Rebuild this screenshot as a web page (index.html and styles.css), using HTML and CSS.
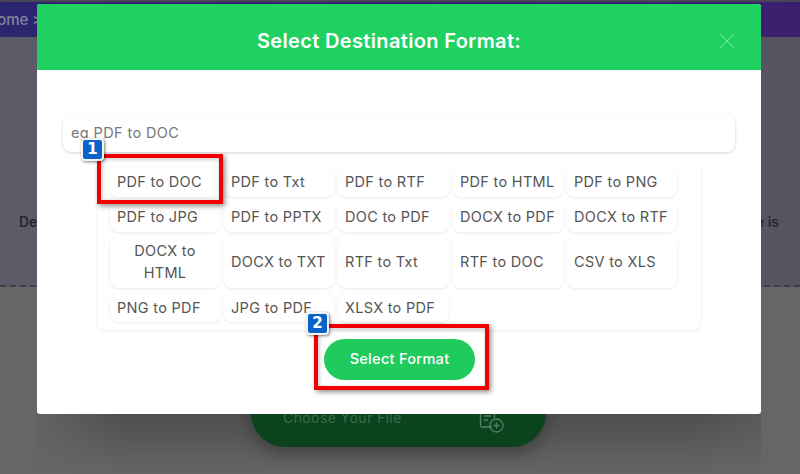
FILE: index.html
```html
<!DOCTYPE html>
<html lang="en">
<head>
<meta charset="utf-8">
<title>Select Destination Format</title>
<link rel="stylesheet" href="styles.css">
</head>
<body>
<div class="page">
  <nav class="crumbs">Home &gt;</nav>
  <section class="intro">
    <p class="intro-text"><span>De</span><span>e is</span></p>
  </section>
  <section class="upload">
    <div class="choose">
      <span>Choose Your File</span>
      <svg class="choose-icon" viewBox="0 0 26 24" width="26" height="24" fill="none" stroke="currentColor" stroke-width="1.3"><path d="M13 17H3a1.500 1.500 0 0 1-1.500-1.500V1.500H14a1.500 1.500 0 0 1 1.500 1.500v5"/><path d="M5 6h7M5 10h4"/><circle cx="17.500" cy="15.500" r="6.500"/><path d="M17.500 12.500v6M14.500 15.500h6"/></svg>
    </div>
  </section>
</div>
<div class="overlay">
  <div class="modal">
    <header class="modal-head">
      <h2>Select Destination Format:</h2>
      <svg class="close" viewBox="0 0 16 16" width="16" height="16" stroke="currentColor" fill="none" stroke-width="1"><path d="M.5.500l15 15M15.500.500l-15 15"/></svg>
    </header>
    <div class="modal-body">
      <div class="search">eg PDF to DOC</div>
      <div class="panel">
        <div class="chip">PDF to DOC</div>
        <div class="chip">PDF to Txt</div>
        <div class="chip">PDF to RTF</div>
        <div class="chip">PDF to HTML</div>
        <div class="chip">PDF to PNG</div>
        <div class="chip">PDF to JPG</div>
        <div class="chip">PDF to PPTX</div>
        <div class="chip">DOC to PDF</div>
        <div class="chip">DOCX to PDF</div>
        <div class="chip">DOCX to RTF</div>
        <div class="chip center">DOCX to HTML</div>
        <div class="chip">DOCX to TXT</div>
        <div class="chip">RTF to Txt</div>
        <div class="chip">RTF to DOC</div>
        <div class="chip">CSV to XLS</div>
        <div class="chip">PNG to PDF</div>
        <div class="chip">JPG to PDF</div>
        <div class="chip">XLSX to PDF</div>
      </div>
      <div class="actions"><button class="select">Select Format</button></div>
    </div>
  </div>
</div>
<div class="mark mark-one"></div>
<div class="badge badge-one">1</div>
<div class="mark mark-two"></div>
<div class="badge badge-two">2</div>
</body>
</html>
```
FILE: styles.css
```css
* { box-sizing: border-box; }
html, body { margin: 0; padding: 0; }
body { width: 800px; height: 474px; overflow: hidden; position: relative; background: #4a4658; font-family: "Inter", "Liberation Sans", sans-serif; }
.page { display: flex; flex-direction: column; height: 474px; }
.crumbs { height: 35px; margin-top: 2px; background: linear-gradient(90deg, #2b2670, #3a1f6e); color: #86839f; font-size: 15px; font-weight: 500; padding: 8px 0 0 0; text-indent: -14px; white-space: nowrap; }
.intro { height: 250px; background: linear-gradient(90deg, #5c5c68, #555560); border-bottom: 2px dashed #3f3f46; }
.intro-text { margin: 176px 0 0; display: flex; justify-content: space-between; padding: 0 21px 0 19px; font-size: 14px; font-weight: 600; color: #26262c; }
.upload { flex: 1; display: flex; justify-content: center; background: #666; position: relative; }
.upload::before { content: ""; position: absolute; left: 37px; width: 724px; top: 127px; bottom: 0; background: linear-gradient(180deg, rgba(0,0,0,.24), rgba(0,0,0,0)); -webkit-mask-image: linear-gradient(90deg, rgba(0,0,0,.15), #000 90px, #000 650px, rgba(0,0,0,.5)); mask-image: linear-gradient(90deg, rgba(0,0,0,.15), #000 90px, #000 650px, rgba(0,0,0,.5)); }
.choose { position: relative; width: 295px; height: 108px; margin: 52px 0 0 -3px; padding: 70px 41px 0 32px; border-radius: 0 0 34px 34px; background: #0b431d; color: #3a6a4a; font-size: 14px; letter-spacing: .4px; display: flex; justify-content: space-between; align-items: flex-start; box-shadow: 0 8px 14px rgba(0,0,0,.25); }
.choose-icon { color: #57806a; margin-top: 1px; }
.overlay { position: absolute; inset: 0; padding: 4px 39px 0 37px; }
.modal { background: #fff; height: 410px; border-radius: 3px; overflow: hidden; }
.modal-head { height: 66px; background: #1fd160; display: flex; align-items: center; justify-content: center; position: relative; }
.modal-head h2 { margin: 0; color: #fff; font-size: 20px; font-weight: 600; letter-spacing: .35px; position: relative; left: -10px; top: 4px; }
.close { position: absolute; right: 26px; top: 29px; color: #7fe6a3; }
.modal-body { padding: 45px 26px 0; display: flex; flex-direction: column; }
.search { height: 37px; border-radius: 8px; padding: 9px 8px; font-size: 14.500px; letter-spacing: .38px; color: #777; box-shadow: 0 1px 3px rgba(0,0,0,.18); }
.panel { width: 604px; height: 169px; margin: 9px 0 0 34px; padding: 6px 24px 0 13px; border-radius: 8px; box-shadow: 0 1px 3px rgba(0,0,0,.09); display: grid; grid-template-columns: 110px 110px 111px 110px 110px; grid-template-rows: 30px 30px 52px 29px; column-gap: 4px; row-gap: 4.700px; }
.chip { border-radius: 8px; box-shadow: 0 1px 3px rgba(0,0,0,.09); padding: 0 7px; display: flex; align-items: center; font-size: 14.500px; letter-spacing: .3px; line-height: 22px; color: #555; }
.center { text-align: center; padding: 0 20px; }
.actions { display: flex; justify-content: center; margin: 9px 0 0 1px; }
.select { width: 151px; height: 41px; border: 0; border-radius: 21px; background: #1fcb5c; color: #fff; font: 500 14.500px "Inter", "Liberation Sans", sans-serif; letter-spacing: .3px; padding-bottom: 4px; }
.mark { position: absolute; border: 4px solid #f00000; box-shadow: 2px 2px 5px rgba(0,0,0,.45), inset 1px 1px 4px rgba(0,0,0,.25); }
.mark-one { left: 97px; top: 154px; width: 126px; height: 50px; }
.mark-two { left: 314px; top: 324px; width: 175px; height: 66px; }
.badge { position: absolute; width: 23px; height: 23px; border: 2px solid #f4f4f4; border-radius: 4px; background: #0a63c9; color: #fff; font: 700 15px/19px "DejaVu Sans", sans-serif; text-align: center; box-shadow: 1px 1px 3px rgba(0,0,0,.5); }
.badge-one { left: 81px; top: 138px; }
.badge-two { left: 306px; top: 312px; }
```
